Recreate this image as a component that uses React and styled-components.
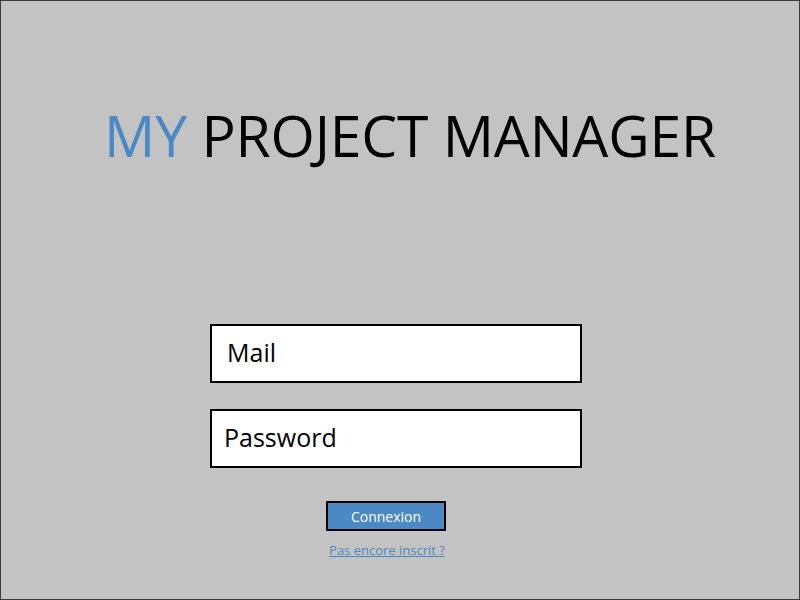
import React from "react";
import styled, { createGlobalStyle } from "styled-components";

const GlobalStyle = createGlobalStyle`
  html, body {
    margin: 0;
    padding: 0;
  }
  body {
    font-family: "Open Sans", "Noto Sans", sans-serif;
  }
`;

export default function App() {
  return (
    <Page>
      <GlobalStyle />
      <Title>
        <Accent>MY</Accent> PROJECT MANAGER
      </Title>
      <Form>
        <Field>Mail</Field>
        <Field $indent={12}>Password</Field>
        <Button>Connexion</Button>
        <SignupLink href="#">Pas encore inscrit ?</SignupLink>
      </Form>
    </Page>
  );
}

const Page = styled.div`
  box-sizing: border-box;
  width: 800px;
  height: 600px;
  background: #c3c3c3;
  border: 1px solid #3a3a3a;
  display: flex;
  flex-direction: column;
  align-items: center;
`;

const Title = styled.h1`
  margin: 94px 0 0 20px;
  font-size: 57px;
  font-weight: 400;
  line-height: 80px;
  color: #000;
  letter-spacing: -0.2px;
`;

const Accent = styled.span`
  color: #4a89c4;
`;

const Form = styled.div`
  margin-top: 149px;
  display: flex;
  flex-direction: column;
  align-items: center;
`;

const Field = styled.div`
  box-sizing: border-box;
  width: 372px;
  height: 59px;
  margin-left: -8px;
  margin-bottom: 26px;
  padding: 0 0 4px ${(p) => p.$indent ?? 15}px;
  border: 2px solid #000;
  background: #fff;
  display: flex;
  align-items: center;
  font-size: 25px;
  color: #000;
`;

const Button = styled.button`
  box-sizing: border-box;
  width: 120px;
  height: 30px;
  margin-top: 7px;
  margin-left: -28px;
  border: 2px solid #000;
  background: #4a89c4;
  color: #fff;
  font-family: "Open Sans", "Noto Sans", sans-serif;
  font-size: 14px;
  padding: 0;
`;

const SignupLink = styled.a`
  margin-top: 10px;
  margin-left: -26px;
  font-size: 13px;
  color: #4a89c4;
  text-decoration: underline;
`;
